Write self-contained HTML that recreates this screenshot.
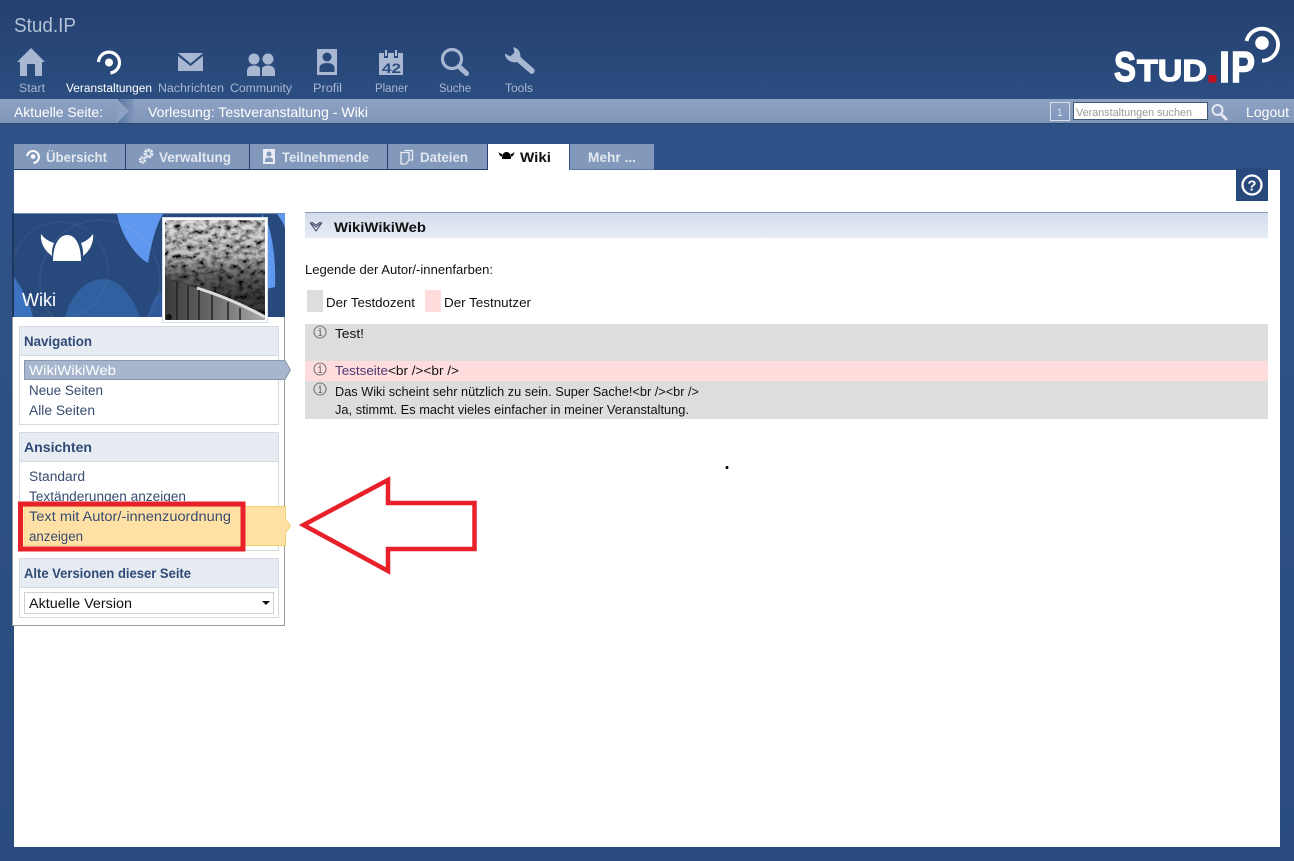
<!DOCTYPE html>
<html lang="de"><head><meta charset="utf-8"><title>Stud.IP Wiki</title>
<style>
html,body{margin:0;padding:0;width:1294px;height:861px;overflow:hidden;background:#2a4d80}
svg{display:block}
text{font-family:"Liberation Sans",sans-serif;font-size:13.5px;white-space:pre}
.n{font-size:11.5px;fill:#a9b8d2}
.tab{font-size:13.5px;font-weight:bold;fill:#e3e8f0}
.h{font-size:13.5px;font-weight:bold;fill:#2f4a76}
.l{font-size:13.5px;fill:#384c70}
.c{font-size:12.5px;fill:#111}
.logo{font-weight:bold;fill:#fff;stroke:#fff}
</style></head><body>
<svg xmlns="http://www.w3.org/2000/svg" width="1294" height="861" viewBox="0 0 1294 861">
<defs>
<linearGradient id="bg" x1="0" y1="0" x2="0" y2="861" gradientUnits="userSpaceOnUse">
<stop offset="0" stop-color="#24406f"/><stop offset=".16" stop-color="#2f5388"/><stop offset="1" stop-color="#294b7e"/>
</linearGradient>
<linearGradient id="hd" x1="0" y1="0" x2="0" y2="1"><stop offset="0" stop-color="#d2dbeb"/><stop offset="1" stop-color="#e8edf5"/></linearGradient>
<linearGradient id="arr" x1="0" y1="0" x2="1" y2="0"><stop offset="0" stop-color="#56769f"/><stop offset="1" stop-color="#8197ba"/></linearGradient>
<linearGradient id="bar" x1="0" y1="0" x2="0" y2="1"><stop offset="0" stop-color="#8da2c3"/><stop offset="1" stop-color="#8197ba"/></linearGradient>
<linearGradient id="wall" x1="0" y1="0" x2="1" y2="0"><stop offset="0" stop-color="#3a3a3a"/><stop offset=".45" stop-color="#666"/><stop offset="1" stop-color="#aaa"/></linearGradient>
<linearGradient id="shade" x1="0" y1="0" x2="0" y2="1"><stop offset="0" stop-color="#666" stop-opacity=".2"/><stop offset=".35" stop-color="#000" stop-opacity=".25"/><stop offset=".55" stop-color="#000" stop-opacity=".6"/><stop offset=".75" stop-color="#000" stop-opacity=".75"/><stop offset="1" stop-color="#000" stop-opacity=".8"/></linearGradient>
<filter id="noise" x="0" y="0" width="100%" height="100%">
<feTurbulence type="fractalNoise" baseFrequency=".16 .2" numOctaves="3" seed="11"/>
<feColorMatrix values="2.2 0 0 0 -.5  2.2 0 0 0 -.5  2.2 0 0 0 -.5  0 0 0 0 1"/>
</filter>
<clipPath id="sb"><rect x="13" y="214" width="272" height="103"/></clipPath>
<clipPath id="ph"><rect x="165" y="220" width="100" height="100"/></clipPath>
</defs>

<rect width="1294" height="861" fill="url(#bg)"/>
<text x="14" y="32" textLength="62" lengthAdjust="spacingAndGlyphs" style="font-size:20px;fill:#b4c1d6">Stud.IP</text>

<!-- top nav icons -->
<g fill="#a9b8d2">
<path d="M31 48 L17 62 L20 62 L20 76 L27 76 L27 64 L35 64 L35 76 L42 76 L42 62 L45 62 Z"/>
<path d="M178 53 H203 L190.500 63.500 Z M178 56 L190.500 66 L203 56 V71 H178 Z"/>
<circle cx="254" cy="59" r="5.500"/><circle cx="268" cy="59" r="5.500"/>
<path d="M247 76 V72 C247 67 250 65.500 254 65.500 C257 65.500 259 66.500 260 68 V76 Z M262 76 V68 C263 66.500 265 65.500 268 65.500 C272 65.500 275 67 275 72 V76 Z"/>
<path fill-rule="evenodd" d="M317 49 H337 V75 H317 Z M327 52.500 A4.500 4.500 0 1 0 327 61.500 A4.500 4.500 0 1 0 327 52.500 Z M319.500 72 H334.500 V68 C334.500 64.500 331 63 327 63 C323 63 319.500 64.500 319.500 68 Z"/>
<path d="M379 53 H384 V58 H388 V53 H394 V58 H398 V53 H403 V75 H379 Z"/>
<path d="M520 0" />
</g>
<g stroke="#a9b8d2" stroke-width="2" fill="none"><path d="M386 50 V56 M396 50 V56"/></g>
<text x="382" y="73" textLength="19" lengthAdjust="spacingAndGlyphs" style="font-size:14px;font-weight:bold;fill:#2b4d80">42</text>
<g fill="none" stroke="#a9b8d2"><circle cx="452" cy="59" r="9.500" stroke-width="3.200"/><path d="M459 66.500 L466.500 73.500" stroke-width="5" stroke-linecap="round"/></g>
<path d="M513.300 47.300 C517 47.500 520.500 51 520.500 57 L534 69 C536 71 533 75.500 530.500 73.500 L517 62 C512 63.500 505 60 505 53.500 L510 56.500 L514.500 52.500 Z" fill="#a9b8d2"/>
<!-- Veranstaltungen icon -->
<circle cx="109" cy="62.500" r="4" fill="#fff"/>
<path d="M98.500 62 A10.500 10.500 0 1 1 110.500 73" fill="none" stroke="#fff" stroke-width="3.200"/>

<text class="n" x="19" y="92" textLength="26" lengthAdjust="spacingAndGlyphs">Start</text>
<text class="n" x="66" y="92" textLength="86" lengthAdjust="spacingAndGlyphs" style="fill:#fff">Veranstaltungen</text>
<text class="n" x="158" y="92" textLength="66" lengthAdjust="spacingAndGlyphs">Nachrichten</text>
<text class="n" x="230" y="92" textLength="62" lengthAdjust="spacingAndGlyphs">Community</text>
<text class="n" x="313" y="92" textLength="29" lengthAdjust="spacingAndGlyphs">Profil</text>
<text class="n" x="375" y="92" textLength="33" lengthAdjust="spacingAndGlyphs">Planer</text>
<text class="n" x="439" y="92" textLength="32" lengthAdjust="spacingAndGlyphs">Suche</text>
<text class="n" x="505" y="92" textLength="28" lengthAdjust="spacingAndGlyphs">Tools</text>

<!-- logo -->
<text class="logo" x="1114" y="81" textLength="22" lengthAdjust="spacingAndGlyphs" style="font-size:42px;stroke-width:1.400">S</text>
<text class="logo" x="1137" y="81" textLength="70" lengthAdjust="spacingAndGlyphs" style="font-size:31px;stroke-width:1.200">TUD</text>
<text class="logo" x="1219" y="82" textLength="11" lengthAdjust="spacingAndGlyphs" style="font-size:44px;stroke-width:1.400">I</text>
<text class="logo" x="1231" y="82" textLength="24" lengthAdjust="spacingAndGlyphs" style="font-size:44px;stroke-width:1.400">P</text>
<rect x="1208.500" y="75" width="8" height="7.500" fill="#c0101e"/>
<circle cx="1262" cy="43" r="6.800" fill="#fff"/>
<path d="M1246.500 41 A16 16 0 1 1 1262 60.700" fill="none" stroke="#fff" stroke-width="3.800"/>

<!-- breadcrumb bar -->
<rect x="0" y="99" width="1294" height="24" fill="url(#bar)"/>
<rect x="0" y="123" width="1294" height="1" fill="#25416f" opacity=".7"/>
<rect x="118" y="99" width="16" height="24" fill="url(#arr)"/>
<path d="M117 99 L129 111 L117 123 Z" fill="#8da2c3"/>
<text x="14" y="117" textLength="89" lengthAdjust="spacingAndGlyphs" style="font-size:14px;fill:#fff">Aktuelle Seite:</text>
<text x="148" y="117" textLength="220" lengthAdjust="spacingAndGlyphs" style="font-size:14px;fill:#fff">Vorlesung: Testveranstaltung - Wiki</text>
<rect x="1050.500" y="102.500" width="19" height="18" fill="none" stroke="#d7deea"/>
<text x="1057" y="116" textLength="5.500" lengthAdjust="spacingAndGlyphs" style="font-size:11px;fill:#dfe5ee">1</text>
<rect x="1073.500" y="102.500" width="134" height="17" fill="#fff" stroke="#41577c"/>
<text x="1076" y="116" textLength="116" lengthAdjust="spacingAndGlyphs" style="font-size:11px;fill:#999">Veranstaltungen suchen</text>
<g fill="none" stroke="#e4e9f1"><circle cx="1217.500" cy="110" r="5" stroke-width="2"/><path d="M1221.500 114.500 L1226 119" stroke-width="3" stroke-linecap="round"/></g>
<text x="1246" y="117" textLength="43" lengthAdjust="spacingAndGlyphs" style="font-size:14px;fill:#fff">Logout</text>

<!-- content -->
<rect x="14" y="170" width="1266" height="677" fill="#fff"/>

<!-- tabs -->
<g fill="#8299bc">
<rect x="14" y="144" width="111" height="25"/><rect x="126" y="144" width="123" height="25"/><rect x="250" y="144" width="137" height="25"/><rect x="388" y="144" width="99" height="25"/><rect x="570" y="144" width="84" height="25"/>
</g>
<rect x="14" y="169" width="474" height="1" fill="#24406f"/>
<rect x="125" y="144" width="1" height="26" fill="#24406f"/><rect x="249" y="144" width="1" height="26" fill="#24406f"/><rect x="387" y="144" width="1" height="26" fill="#24406f"/><rect x="487" y="144" width="1" height="26" fill="#24406f"/>
<rect x="568" y="169" width="86" height="1" fill="#5b76a0"/>
<rect x="488" y="144" width="81" height="27" fill="#fff"/>
<text class="tab" x="46" y="162" textLength="61" lengthAdjust="spacingAndGlyphs">Übersicht</text>
<text class="tab" x="159" y="162" textLength="72" lengthAdjust="spacingAndGlyphs">Verwaltung</text>
<text class="tab" x="282" y="162" textLength="87" lengthAdjust="spacingAndGlyphs">Teilnehmende</text>
<text class="tab" x="420" y="162" textLength="48" lengthAdjust="spacingAndGlyphs">Dateien</text>
<text class="tab" x="520" y="162" textLength="31" lengthAdjust="spacingAndGlyphs" style="fill:#111">Wiki</text>
<text class="tab" x="588" y="162" textLength="48" lengthAdjust="spacingAndGlyphs">Mehr ...</text>
<!-- tab icons -->
<circle cx="33" cy="156.500" r="2.300" fill="#fff"/><path d="M27 156 A6 6 0 1 1 33.500 163" fill="none" stroke="#fff" stroke-width="2"/>
<g fill="none" stroke="#e9edf3"><circle cx="148.500" cy="153.500" r="3.300" stroke-width="3.200" stroke-dasharray="2.200 .7"/><circle cx="142.500" cy="160" r="2.400" stroke-width="2.600" stroke-dasharray="1.800 .6"/></g>
<path fill-rule="evenodd" d="M263 149 H275 V164 H263 Z M269 151.500 A2.500 2.500 0 1 0 269 156.500 A2.500 2.500 0 1 0 269 151.500 Z M265 162 H273 V160 C273 158 271 157.500 269 157.500 C267 157.500 265 158 265 160 Z" fill="#e9edf3"/>
<path d="M404.500 150.500 H412.500 V160 H410 M401 152.500 H409 V160 L406 164 H401 Z" fill="none" stroke="#e9edf3" stroke-width="1.300"/>
<path d="M502 159 C502 154 504 152 506.500 152 C509 152 511 154 511 159 Z M498.500 152 C499 154.500 500 156 501.500 157 L502.500 154 C501 154 499.500 153 498.500 152 Z M514.500 152 C514 154.500 513 156 511.500 157 L510.500 154 C512 154 513.500 153 514.500 152 Z" fill="#000"/>

<!-- help -->
<rect x="1236" y="168" width="32" height="33" fill="#28497c"/>
<circle cx="1252" cy="185" r="9.500" fill="none" stroke="#fff" stroke-width="2.300"/>
<text x="1252" y="190.500" text-anchor="middle" style="font-size:15px;font-weight:bold;fill:#fff">?</text>

<!-- sidebar -->
<rect x="12.500" y="213.500" width="272" height="412" fill="#fff" stroke="#9a9a9a"/>
<rect x="13" y="213" width="272" height="104" fill="#28497c"/>
<rect x="13" y="213" width="272" height="1" fill="#6f8fbb"/>
<rect x="12" y="213" width="2" height="104" fill="#1c365f"/>
<g clip-path="url(#sb)">
<path d="M117 214 C121 235 135 256 148 263 C151 245 156 225 163 214 Z" fill="#5f98ee"/>
<path d="M176 214 H262 L268 224 C273 240 276 262 275 287 L262 290 V214 Z" fill="#5f98ee"/>
<path d="M277 214 H285 V228 C283 222 280 218 277 214 Z" fill="#5f98ee"/>
<path d="M14 317 L14 277 C20 285 28 298 33 317 Z" fill="#3a72c0"/>
<path d="M65 317 C72 292 88 279 103 279 C118 279 132 294 140 317 Z" fill="#30609f"/>
<path d="M148 317 C150 305 155 295 162 290 V317 Z" fill="#30599a"/>
<circle cx="60" cy="270" r="48" fill="none" stroke="#fff" stroke-opacity=".04" stroke-width="2"/>
<circle cx="100" cy="280" r="60" fill="none" stroke="#fff" stroke-opacity=".05" stroke-width="2"/>
</g>
<path d="M53 261 C53 245 59 235 67.200 235 C75.500 235 81 245 81 261 Z" fill="#fff"/>
<path d="M41 234 C44 238 48 241 54 243 C52.500 247 51.500 251 52 256 C45 251 40 243 41 234 Z M93 234 C90 238 86.500 241 81 243 C82.500 247 83.500 251 83 256 C89.500 251 94 243 93 234 Z" fill="#fff"/>
<text x="22" y="306" textLength="34" lengthAdjust="spacingAndGlyphs" style="font-size:18px;fill:#fff">Wiki</text>

<!-- photo -->
<rect x="162.500" y="217.500" width="105" height="105" fill="#fff" stroke="#d5dbe6"/>
<g clip-path="url(#ph)">
<rect x="165" y="220" width="100" height="100" filter="url(#noise)"/>
<rect x="165" y="220" width="100" height="100" fill="url(#shade)"/>
<path d="M165 278 C190 286 230 298 265 318 V320 H165 Z" fill="url(#wall)"/>
<path d="M197 288 C220 295 245 306 265 317" fill="none" stroke="#ddd" stroke-width="3"/>
<g stroke="#222" stroke-width="1.500"><path d="M177 282 V320 M188 285 V320 M199 290 V320 M212 295 V320 M228 302 V320 M240 308 V320"/></g>
<circle cx="169" cy="317" r="3" fill="#111"/>
</g>

<!-- nav box -->
<rect x="19.500" y="326.500" width="259" height="98" fill="#fff" stroke="#d4d9e2"/>
<rect x="20" y="327" width="258" height="28" fill="#e7ebf2"/>
<rect x="20" y="355" width="258" height="1" fill="#d4d9e2"/>
<text class="h" x="24" y="346" textLength="68" lengthAdjust="spacingAndGlyphs">Navigation</text>
<path d="M24.500 360.500 H285 L290.500 370 L285 379.500 H24.500 Z" fill="#a7b5cd" stroke="#8a97ad"/>
<text x="29" y="375" textLength="87" lengthAdjust="spacingAndGlyphs" style="font-size:14px;fill:#fff">WikiWikiWeb</text>
<text class="l" x="29" y="395" textLength="74" lengthAdjust="spacingAndGlyphs">Neue Seiten</text>
<text class="l" x="29" y="415" textLength="66" lengthAdjust="spacingAndGlyphs">Alle Seiten</text>

<!-- views box -->
<rect x="19.500" y="432.500" width="259" height="118" fill="#fff" stroke="#d4d9e2"/>
<rect x="20" y="433" width="258" height="28" fill="#e7ebf2"/>
<rect x="20" y="461" width="258" height="1" fill="#d4d9e2"/>
<text class="h" x="24" y="452" textLength="68" lengthAdjust="spacingAndGlyphs">Ansichten</text>
<text class="l" x="29" y="481" textLength="56" lengthAdjust="spacingAndGlyphs">Standard</text>
<text class="l" x="29" y="501" textLength="157" lengthAdjust="spacingAndGlyphs">Textänderungen anzeigen</text>
<path d="M24 506.500 H285.500 V519 L290.500 526 L285.500 533 V545.500 H24 Z" fill="#ffe1a6" stroke="#f3d071"/>
<text class="l" x="29" y="521" textLength="202" lengthAdjust="spacingAndGlyphs">Text mit Autor/-innenzuordnung</text>
<text class="l" x="29" y="541" textLength="54" lengthAdjust="spacingAndGlyphs">anzeigen</text>

<!-- versions box -->
<rect x="19.500" y="558.500" width="259" height="59" fill="#fff" stroke="#d4d9e2"/>
<rect x="20" y="559" width="258" height="28" fill="#e7ebf2"/>
<rect x="20" y="587" width="258" height="1" fill="#d4d9e2"/>
<text class="h" x="24" y="578" textLength="167" lengthAdjust="spacingAndGlyphs">Alte Versionen dieser Seite</text>
<rect x="24.500" y="592.500" width="249" height="21" fill="#fff" stroke="#d0d0d0"/>
<text x="29" y="608" textLength="103" lengthAdjust="spacingAndGlyphs" style="font-size:14px;fill:#111">Aktuelle Version</text>
<path d="M262 601 H270 L266 605 Z" fill="#111"/>

<!-- annotations -->
<rect x="20.500" y="504" width="222.500" height="45" fill="none" stroke="#e8202a" stroke-width="5"/>
<path d="M303.500 525 L388 480 V503 H474.500 V549 H388 V571 Z" fill="none" stroke="#e8202a" stroke-width="4.500" stroke-linejoin="miter"/>

<!-- main -->
<rect x="305" y="212" width="963" height="26" fill="url(#hd)"/>
<rect x="305" y="212" width="963" height="1" fill="#8a9bbb"/>
<path d="M310 222.500 L316 227 L322 222.500 L316 231 Z" fill="none" stroke="#3a4560" stroke-width="1"/>
<path d="M311.500 222 L316 225 L320.500 222" fill="none" stroke="#3a4560" stroke-width="1"/>
<text x="334" y="232" textLength="92" lengthAdjust="spacingAndGlyphs" style="font-size:13.500px;font-weight:bold;fill:#111">WikiWikiWeb</text>
<text class="c" x="305" y="274" textLength="188" lengthAdjust="spacingAndGlyphs">Legende der Autor/-innenfarben:</text>
<rect x="307" y="290" width="16" height="22" fill="#ddd"/>
<rect x="425" y="290" width="16" height="22" fill="#fdd"/>
<text class="c" x="326" y="307" textLength="89" lengthAdjust="spacingAndGlyphs">Der Testdozent</text>
<text class="c" x="444" y="307" textLength="87" lengthAdjust="spacingAndGlyphs">Der Testnutzer</text>

<rect x="305" y="324" width="963" height="37" fill="#ddd"/>
<rect x="305" y="361" width="963" height="20" fill="#fdd"/>
<rect x="305" y="381" width="963" height="38" fill="#ddd"/>
<g fill="none" stroke="#777" stroke-width="1.100">
<circle cx="320" cy="332" r="6"/><circle cx="320" cy="369" r="6"/><circle cx="320" cy="389" r="6"/>
<path d="M318.500 330.500 H320.300 V335.500 M318.500 335.500 H322 M318.500 367.500 H320.300 V372.500 M318.500 372.500 H322 M318.500 387.500 H320.300 V392.500 M318.500 392.500 H322"/>
</g>
<g fill="#777"><rect x="319.300" y="328" width="1.500" height="1.400"/><rect x="319.300" y="365" width="1.500" height="1.400"/><rect x="319.300" y="385" width="1.500" height="1.400"/></g>
<text class="c" x="335" y="338" textLength="29" lengthAdjust="spacingAndGlyphs">Test!</text>
<text class="c" x="335" y="375" textLength="53" lengthAdjust="spacingAndGlyphs" style="fill:#4a3a70">Testseite</text>
<text class="c" x="388" y="375" textLength="71" lengthAdjust="spacingAndGlyphs">&lt;br /&gt;&lt;br /&gt;</text>
<text class="c" x="335" y="396" textLength="364" lengthAdjust="spacingAndGlyphs">Das Wiki scheint sehr nützlich zu sein. Super Sache!&lt;br /&gt;&lt;br /&gt;</text>
<text class="c" x="335" y="414" textLength="354" lengthAdjust="spacingAndGlyphs">Ja, stimmt. Es macht vieles einfacher in meiner Veranstaltung.</text>
<circle cx="727" cy="467.500" r="1.500" fill="#000"/>
</svg>
</body></html>
